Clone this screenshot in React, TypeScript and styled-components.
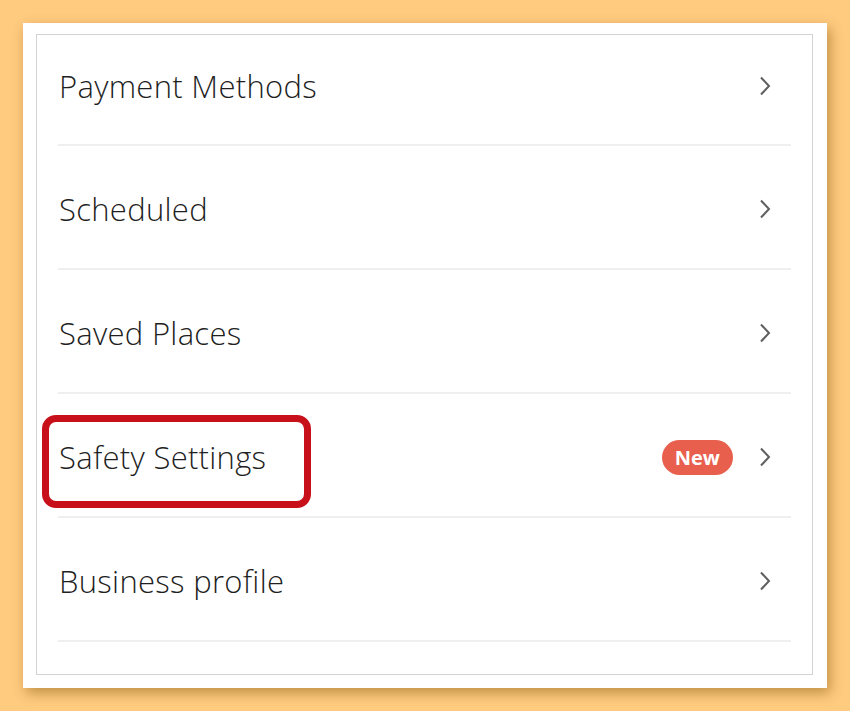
import styled, { createGlobalStyle } from 'styled-components';

const GlobalStyle = createGlobalStyle`
  html, body {
    margin: 0;
    padding: 0;
    background: #fecb7f;
  }
  body {
    font-family: 'Open Sans', 'Noto Sans', sans-serif;
  }
`;

const Page = styled.div`
  width: 850px;
  height: 711px;
  padding: 23px 0 0 23px;
  box-sizing: border-box;
`;

const Card = styled.div`
  width: 804px;
  height: 665px;
  box-sizing: border-box;
  padding: 11px 14px 13px 13px;
  background: #ffffff;
  box-shadow: 3px 5px 12px rgba(120, 70, 0, 0.45);
`;

const Panel = styled.div`
  height: 100%;
  box-sizing: border-box;
  border: 1px solid #d3d3d3;
  display: flex;
  flex-direction: column;
`;

const Row = styled.div<{ $first?: boolean }>`
  position: relative;
  margin: 0 21px;
  height: ${(p) => (p.$first ? '111px' : '124px')};
  box-sizing: border-box;
  padding: ${(p) => (p.$first ? '0 0 7px' : '4px 0 0')};
  border-bottom: 2px solid #efefef;
  display: flex;
  align-items: center;
  gap: 26px;
`;

const Label = styled.span`
  flex: 1;
  padding-left: 1px;
  font-size: 31px;
  font-weight: 300;
  color: #1f1f1f;
  letter-spacing: 0.3px;
`;

const Badge = styled.span`
  height: 35px;
  padding: 0 13px;
  border-radius: 18px;
  background: #e8604d;
  color: #ffffff;
  font-size: 20px;
  font-weight: 700;
  display: flex;
  align-items: center;
`;

const Chevron = styled.svg`
  width: 12px;
  height: 20px;
  margin-right: 20px;
  flex-shrink: 0;
`;

const Highlight = styled.div`
  position: absolute;
  left: -16px;
  top: 21px;
  width: 269px;
  height: 93px;
  box-sizing: border-box;
  border: 7px solid #c8101a;
  border-radius: 14px;
  pointer-events: none;
`;

type Item = { label: string; isNew?: boolean; highlighted?: boolean };

const items: Item[] = [
  { label: 'Payment Methods' },
  { label: 'Scheduled' },
  { label: 'Saved Places' },
  { label: 'Safety Settings', isNew: true, highlighted: true },
  { label: 'Business profile' },
];

function ChevronIcon() {
  return (
    <Chevron viewBox="0 0 12 20">
      <path d="M2 1.5 L10 10 L2 18.5" fill="none" stroke="#5f5f5f" strokeWidth="2" />
    </Chevron>
  );
}

function App() {
  return (
    <Page>
      <GlobalStyle />
      <Card>
        <Panel>
          {items.map((item, i) => (
            <Row key={item.label} $first={i === 0}>
              <Label>{item.label}</Label>
              {item.isNew && <Badge>New</Badge>}
              <ChevronIcon />
              {item.highlighted && <Highlight />}
            </Row>
          ))}
        </Panel>
      </Card>
    </Page>
  );
}

export default App;
